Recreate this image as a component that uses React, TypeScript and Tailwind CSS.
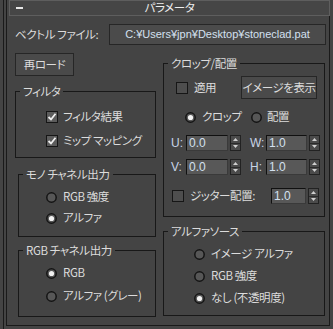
import React from "react";

const FONT = "[font-family:'Noto_Sans_CJK_JP',sans-serif] [font-feature-settings:'palt'] tracking-[-0.4px]";

function Check({ checked }: { checked?: boolean }) {
  return (
    <span className="w-[12px] h-[12px] border border-[#161616] bg-[#5c5c5c] flex items-center justify-center shrink-0">
      {checked ? (
        <svg width="10" height="10" viewBox="0 0 10 10">
          <path d="M1.5 5 L4 7.5 L8.5 1.8" stroke="#f0f0f0" strokeWidth="1.8" fill="none" />
        </svg>
      ) : (
        <span className="w-[10px] h-[10px] bg-[#4e4e4e]" />
      )}
    </span>
  );
}

function Radio({ on }: { on?: boolean }) {
  return (
    <svg width="11" height="11" viewBox="0 0 11 11" className="shrink-0">
      <circle cx="5.5" cy="5.5" r="4.7" fill="#575757" stroke="#141414" strokeWidth="1.5" />
      {on && <circle cx="5.5" cy="5.5" r="2.6" fill="#f2f2f2" />}
    </svg>
  );
}

function Spinner() {
  return (
    <div className="w-[11px] h-[16px] flex flex-col border border-[#222] bg-[#4b4b4b]">
      <div className="flex-1 flex items-center justify-center border-b border-[#2a2a2a]">
        <svg width="5" height="3" viewBox="0 0 5 3"><path d="M0 3 L2.5 0 L5 3 Z" fill="#d0d0d0" /></svg>
      </div>
      <div className="flex-1 flex items-center justify-center">
        <svg width="5" height="3" viewBox="0 0 5 3"><path d="M0 0 L2.5 3 L5 0 Z" fill="#d0d0d0" /></svg>
      </div>
    </div>
  );
}

function NumField({ value, w }: { value: string; w: string }) {
  return (
    <div className={`${w} h-[16px] bg-[#585858] border-t border-l border-[#101010] border-r border-r-[#3a3a3a] border-b border-b-[#3a3a3a] flex items-center pl-[2px] text-[12px] leading-none tracking-normal text-[#d4e0f0] [font-family:'Liberation_Sans',sans-serif]`}>
      {value}
    </div>
  );
}

function Group({ title, className, children }: { title: string; className?: string; children: React.ReactNode }) {
  return (
    <fieldset className={`border border-[#181818] ${className ?? ""}`}>
      <legend className="ml-[4px] px-[3px] leading-[16px] h-[16px]">{title}</legend>
      {children}
    </fieldset>
  );
}

const LBL = "text-[12px] tracking-normal text-[#c8d4e6] [font-family:'Liberation_Sans',sans-serif]";

export default function App() {
  return (
    <div className={`w-[333px] h-[329px] bg-[#444444] text-[#dcdcdc] text-[11.5px] flex overflow-hidden ${FONT}`}>
      <div className="w-[3px]" />
      <div className="w-px bg-[#1a1a1a]" />
      <div className="w-[2px]" />
      <div className="w-[324px] h-[326px] border-l border-r border-b border-[#1a1a1a] flex flex-col">
        {/* header */}
        <div className="ml-[2px] mr-[-1px] h-[16px] border border-[#5e5e5e] bg-[#464646] relative flex items-center justify-center">
          <span className="absolute left-[6px] top-[6px] w-[7px] h-[2px] bg-[#e8e8e8]" />
          <span className="leading-none text-[#eeeeee]">パラメータ</span>
        </div>
        {/* file row */}
        <div className="mt-[8px] flex items-center h-[21px]">
          <span className="ml-[8px] w-[94px] whitespace-pre">ベクトル ファイル:</span>
          <div className="w-[217px] h-[21px] bg-[#4b4b4b] border border-[#262626] flex items-center justify-center text-[11px] tracking-normal text-[#d4e0f0] [font-family:'Liberation_Sans',sans-serif]">
            C:¥Users¥jpn¥Desktop¥stoneclad.pat
          </div>
        </div>
        {/* columns */}
        <div className="mt-[8px] flex">
          {/* left */}
          <div className="ml-[8px] w-[141px] flex flex-col">
            <div className="w-[59px] h-[23px] bg-[#4a4a4a] border border-[#262626] flex items-center justify-center">再ロード</div>
            <Group title="フィルタ" className="mt-[7px]">
              <div className="pl-[30px] pt-[8px] pb-[6px] flex flex-col gap-[4px]">
                <div className="h-[20px] flex items-center gap-[5px]"><Check checked /><span>フィルタ結果</span></div>
                <div className="h-[20px] flex items-center gap-[5px]"><Check checked /><span>ミップ マッピング</span></div>
              </div>
            </Group>
            <Group title="モノ チャネル出力" className="mt-[8px] ml-[3px]">
              <div className="pl-[27px] pt-[5px] pb-[8px] flex flex-col gap-[1px]">
                <div className="h-[20px] flex items-center gap-[6px]"><Radio /><span>RGB 強度</span></div>
                <div className="h-[20px] flex items-center gap-[6px]"><Radio on /><span>アルファ</span></div>
              </div>
            </Group>
            <Group title="RGB チャネル出力" className="mt-[5px] ml-[3px]">
              <div className="pl-[27px] pt-[5px] pb-[10px] flex flex-col gap-[3px]">
                <div className="h-[20px] flex items-center gap-[6px]"><Radio on /><span>RGB</span></div>
                <div className="h-[20px] flex items-center gap-[6px]"><Radio /><span>アルファ (グレー)</span></div>
              </div>
            </Group>
          </div>
          {/* right */}
          <div className="ml-[7px] w-[162px] flex flex-col">
            <Group title="クロップ/配置" className="mt-[2px]">
              <div className="pt-[5px] pb-[12px] flex flex-col">
                <div className="h-[23px] flex items-center">
                  <div className="ml-[12px] flex items-center gap-[6px]"><Check /><span>適用</span></div>
                  <div className="ml-auto mr-[7px] w-[76px] h-[23px] bg-[#4a4a4a] border border-[#262626] flex items-center justify-center whitespace-nowrap">イメージを表示</div>
                </div>
                <div className="mt-[8px] h-[20px] flex items-center">
                  <div className="ml-[21px] w-[66px] flex items-center gap-[6px]"><Radio on /><span>クロップ</span></div>
                  <div className="flex items-center gap-[5px]"><Radio /><span>配置</span></div>
                </div>
                <div className="mt-[8px] h-[16px] flex items-center">
                  <span className={`ml-[7px] w-[15px] ${LBL}`}>U:</span>
                  <NumField value="0.0" w="w-[42px]" />
                  <div className="ml-[2px]"><Spinner /></div>
                  <span className={`ml-[9px] w-[16px] ${LBL}`}>W:</span>
                  <NumField value="1.0" w="w-[41px]" />
                  <div className="ml-[2px]"><Spinner /></div>
                </div>
                <div className="mt-[8px] h-[16px] flex items-center">
                  <span className={`ml-[7px] w-[15px] ${LBL}`}>V:</span>
                  <NumField value="0.0" w="w-[42px]" />
                  <div className="ml-[2px]"><Spinner /></div>
                  <span className={`ml-[9px] w-[16px] ${LBL}`}>H:</span>
                  <NumField value="1.0" w="w-[41px]" />
                  <div className="ml-[2px]"><Spinner /></div>
                </div>
                <div className="mt-[13px] h-[16px] flex items-center">
                  <div className="ml-[8px] flex items-center gap-[6px]"><Check /><span className="whitespace-nowrap">ジッター配置:</span></div>
                  <div className="ml-auto flex items-center mr-[5px]">
                    <NumField value="1.0" w="w-[35px]" />
                    <div className="ml-[2px]"><Spinner /></div>
                  </div>
                </div>
              </div>
            </Group>
            <Group title="アルファソース" className="mt-[6px]">
              <div className="pl-[30px] pt-[5px] pb-[7px] flex flex-col gap-[2px]">
                <div className="h-[20px] flex items-center gap-[6px]"><Radio /><span>イメージ アルファ</span></div>
                <div className="h-[20px] flex items-center gap-[6px]"><Radio /><span>RGB 強度</span></div>
                <div className="h-[20px] flex items-center gap-[6px]"><Radio on /><span>なし (不透明度)</span></div>
              </div>
            </Group>
          </div>
        </div>
      </div>
    </div>
  );
}
